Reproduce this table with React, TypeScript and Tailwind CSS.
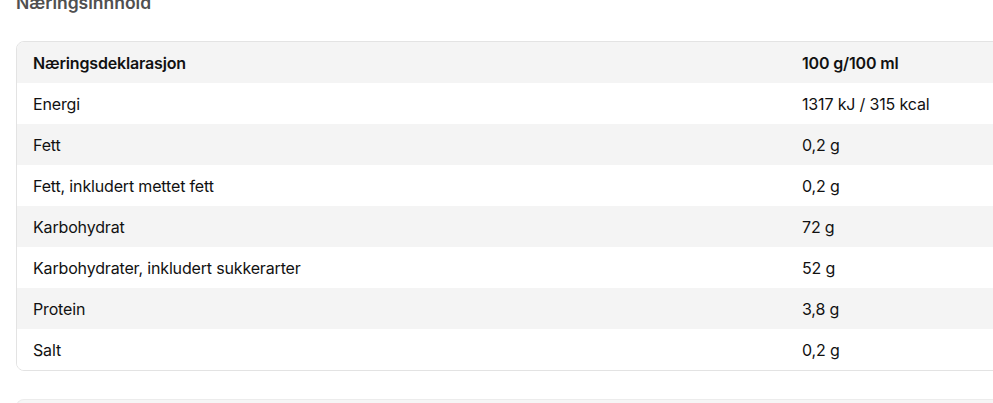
const rows: [string, string][] = [
  ["Energi", "1317 kJ / 315 kcal"],
  ["Fett", "0,2 g"],
  ["Fett, inkludert mettet fett", "0,2 g"],
  ["Karbohydrat", "72 g"],
  ["Karbohydrater, inkludert sukkerarter", "52 g"],
  ["Protein", "3,8 g"],
  ["Salt", "0,2 g"],
];

export default function App() {
  return (
    <main className="h-[403px] w-[993px] overflow-hidden bg-white px-4 font-['Inter',sans-serif] text-[#111]">
      <h2 className="-mt-[9px] text-[17.5px] font-semibold leading-[24px] text-[#505050]">
        Næringsinnhold
      </h2>

      <div className="mt-[26px] w-[1000px] overflow-hidden rounded-lg border border-[#e3e3e3]">
        <table className="w-full border-collapse text-[16px] tracking-[-0.01em]">
          <thead>
            <tr className="h-[41px] bg-[#f4f4f4]">
              <th className="w-[769px] px-4 pt-px text-left font-semibold">Næringsdeklarasjon</th>
              <th className="px-4 pt-px text-left font-semibold">100 g/100 ml</th>
            </tr>
          </thead>
          <tbody>
            {rows.map(([label, value], i) => (
              <tr key={label} className={i % 2 === 1 ? "h-[41px] bg-[#f4f4f4]" : "h-[41px] bg-white"}>
                <td className="px-4 pt-px">{label}</td>
                <td className="px-4 pt-px">{value}</td>
              </tr>
            ))}
          </tbody>
        </table>
      </div>

      <div className="mt-[28px] h-10 w-[1000px] rounded-tl-lg border-t border-l border-[#ececec] bg-[#f6f6f6]" />
    </main>
  );
}
